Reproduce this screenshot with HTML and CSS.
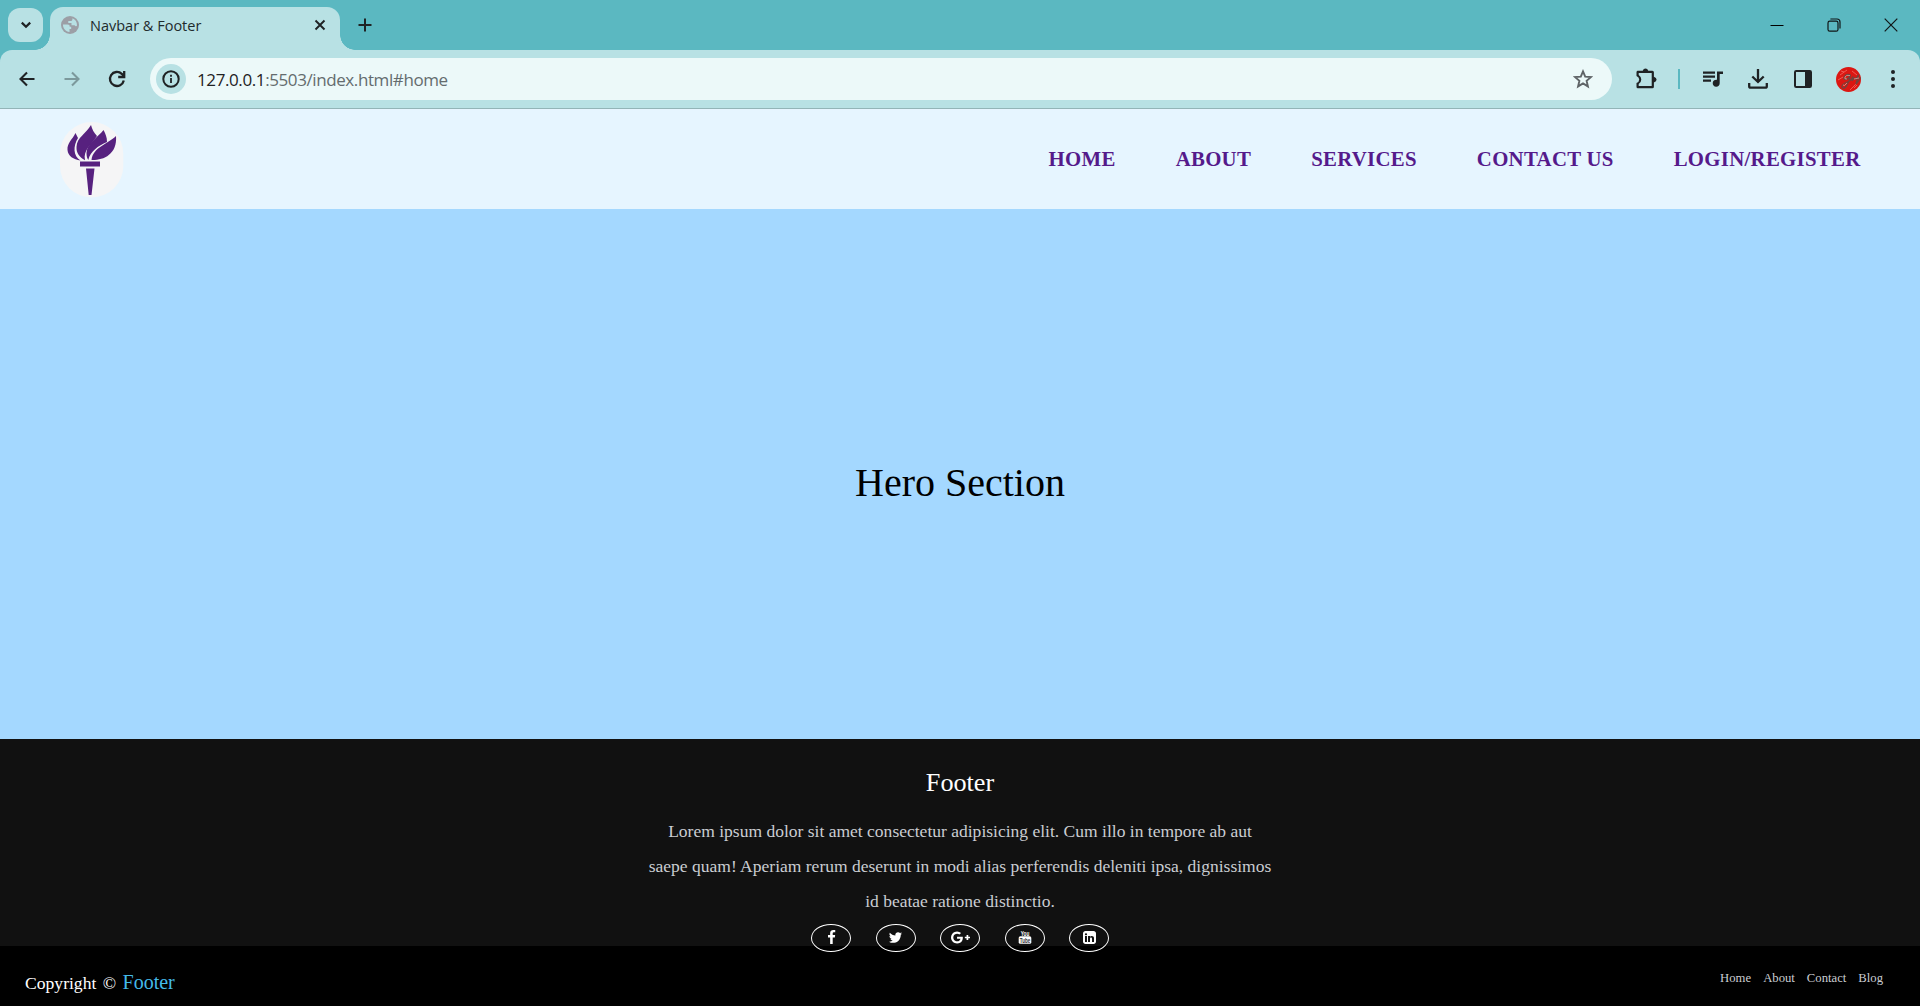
FILE: index.html
```html
<!DOCTYPE html>
<html lang="en">
<head>
<meta charset="utf-8">
<title>Navbar &amp; Footer</title>
<link rel="stylesheet" href="styles.css">
</head>
<body>
<div class="tabstrip">
  <button class="tab-search" aria-label="Search tabs"><svg width="12" height="12" viewBox="0 0 12 12"><path d="M1.8 3.6 6 7.8l4.200-4.200" fill="none" stroke="#1f2224" stroke-width="2.200"/></svg></button>
  <div class="tab">
    <svg class="globe" width="18" height="18" viewBox="0 0 18 18"><circle cx="9" cy="9" r="9" fill="#9c9fa6"/><path d="M2 8.500h4.500c1.800 0 2.200.8 2.200 2.200h1.500v2.200H8.500v3C4.800 15.600 1.800 12.600 2 8.500zM11.500 2.300c3 1.200 4.700 4 4.500 7.200-.6 1.500-1.800.4-2.500-.3h-3V7H7.300V4.900h2.800c1 0 1.400-.8 1.400-2.600z" fill="#b8e1e4"/></svg>
    <span class="tab-title">Navbar &amp; Footer</span>
    <svg width="12" height="12" viewBox="0 0 12 12"><path d="m1.500 1.500 9 9m0-9-9 9" stroke="#1f2224" stroke-width="1.900"/></svg>
  </div>
  <button class="new-tab" aria-label="New tab"><svg width="14" height="14" viewBox="0 0 14 14"><path d="M7 .5v13M.5 7h13" stroke="#1f2224" stroke-width="2"/></svg></button>
  <div class="window-controls">
    <svg width="14" height="14" viewBox="0 0 14 14"><path d="M.5 7.500h13" stroke="#000" stroke-width="1"/></svg>
    <svg width="14" height="14" viewBox="0 0 14 14" fill="none" stroke="#101516" stroke-width="1.200"><rect x="1" y="3.200" width="10" height="10" rx="1.800"/><path d="M3.400 1H10q3 0 3 3v6.500"/></svg>
    <svg width="14" height="14" viewBox="0 0 14 14"><path d="m.7.7 12.600 12.600m0-12.600L.7 13.300" stroke="#101516" stroke-width="1.200"/></svg>
  </div>
</div>
<div class="toolbar-back">
<div class="toolbar">
  <div class="history">
    <svg width="20" height="20" viewBox="0 0 20 20" fill="none" stroke="#1f2224" stroke-width="2.100"><path d="M17.500 10H4M10 3.500 3.500 10l6.500 6.500"/></svg>
    <svg width="20" height="20" viewBox="0 0 20 20" fill="none" stroke="#7c999c" stroke-width="2.100"><path d="M2.500 10H16M10 3.500l6.500 6.500-6.500 6.500"/></svg>
    <svg width="20" height="20" viewBox="0 0 20 20" fill="none" stroke="#1f2224" stroke-width="2.300"><path d="M16.800 11.500A7 7 0 1 1 14.800 4.900L17 7.100"/><path d="M17.200 2v6h-6"/></svg>
  </div>
  <div class="omnibox">
    <span class="site-info"><svg width="18" height="18" viewBox="0 0 18 18"><circle cx="9" cy="9" r="7.700" fill="none" stroke="#1f2224" stroke-width="2"/><path d="M9 8v5M9 4.800v2" stroke="#1f2224" stroke-width="1.800"/></svg></span>
    <span class="url"><b>127.0.0.1</b>:5503/index.html#home</span>
    <svg width="20" height="20" viewBox="0 0 20 20"><path d="m10 2.400 2.200 5.200 5.700.5-4.300 3.700 1.300 5.600-4.900-3-4.900 3 1.300-5.600L2.100 8.100l5.700-.5z" fill="none" stroke="#5f6467" stroke-width="1.900"/></svg>
  </div>
  <div class="actions">
    <svg width="24" height="24" viewBox="0 0 24 24"><path d="M3.500 3.800h5.200q.8-2.300 2.800-2.300t2.800 2.300h4.100q1.500 0 1.500 1.500v4.400q2.700.8 2.700 2.900t-2.700 2.900v4.200q0 1.500-1.500 1.500H3.800q-1.300 0-1.300-1.500V16q2.700-1 2.700-3.500T2.500 9V5.300q0-1.500 1-1.500z" fill="#1f2224"/><path d="M4.700 5.900h13v13.200h-13v-2q2.600-1.600 2.600-4.500T4.700 8z" fill="#b8e1e4"/></svg>
    <i class="divider"></i>
    <svg class="media" width="20" height="18" viewBox="0 0 20 18" fill="#1f2224"><path d="M0 1.500h12v2.200H0zm0 4h12v2.200H0zm0 4h8v2.200H0zM14 1.500h6v2.400h-3.300V13a3.500 3.500 0 1 1-2.700-3.200z"/></svg>
    <svg class="download" width="20" height="20" viewBox="0 0 20 20" fill="none" stroke="#1f2224" stroke-width="2.300"><path d="M10 0v13M4.300 7.500 10 13l5.700-5.500M1.200 14v3.200q0 1.500 1.500 1.500h14.600q1.500 0 1.500-1.500V14"/></svg>
    <svg class="panel" width="18" height="18" viewBox="0 0 18 18"><rect x="1" y="1" width="16" height="16" rx="1.200" fill="none" stroke="#1f2224" stroke-width="2"/><path d="M11 1h6v16h-6z" fill="#1f2224"/></svg>
    <svg class="avatar" width="25" height="25" viewBox="0 0 25 25"><circle cx="12.500" cy="12.500" r="12.500" fill="#dc1712"/><path d="m4 8 7-5M2 13l5-3M14 23l8-8M16 4l5 4M18 21l3-3M5 4l3 1" stroke="#ee5a52" stroke-width="1"/><path d="M14.500 8q-4-1.500-6 1.500t1.500 3q3.500-1.500 4.500-5-1 7-4 11.500-3.500 4-4.500 1t7.500-6q3-2 3.500-4.500l-1 4.500q3-4.500 3-2.500t2.500-2-.5 4 3.500-3" fill="none" stroke="#73443e" stroke-width="1.300"/><path d="M14 8.500q-4-1-5 1.500t2 2m0 4q-3 4-4 2m11-6 5-1" fill="none" stroke="#d8b5a9" stroke-width=".7"/></svg>
    <svg class="menu" width="6" height="20" viewBox="0 0 6 20" fill="#1f2224"><circle cx="3" cy="3" r="2"/><circle cx="3" cy="10" r="2"/><circle cx="3" cy="17" r="2"/></svg>
  </div>
</div>
</div>

<header class="navbar">
  <a class="logo" href="#home"><svg width="64" height="76" viewBox="0 0 64 76"><rect width="63.300" height="75.500" rx="31.600" fill="#f5f5f6"/><g fill="#57217f"><path d="M15.500 11C12 18 7 21 7.500 28c.5 6 6 9.500 13 10.500C13 34 13 24 18 16z"/><path d="M31 3C26 12 17 15 16.500 25c-.3 6 3 10 8.500 13.200C23 28 31 23 37 14 34 11 32 7 31 3z"/><path d="M43.500 8C38 15 26.500 22 26.500 31c0 3 .5 5 1.800 7C30.500 29 38 24 47 20c0-5-1.500-8-3.500-12z"/><path d="M56 14C48 22 33 25 31.500 38c11 .5 26-5 24.500-24z"/><path d="M20 39.500h20v5H20zM26 46.500h8.500L31.500 73h-2.800z"/></g></svg></a>
  <nav class="nav-links">
    <a href="#home">HOME</a><a href="#about">ABOUT</a><a href="#services">SERVICES</a><a href="#contact">CONTACT US</a><a href="#login">LOGIN/REGISTER</a>
  </nav>
</header>

<main class="hero">Hero Section</main>

<footer class="footer">
  <div class="footer-content">
    <h3>Footer</h3>
    <p>Lorem ipsum dolor sit amet consectetur adipisicing elit. Cum illo in tempore ab aut<br>saepe quam! Aperiam rerum deserunt in modi alias perferendis deleniti ipsa, dignissimos<br>id beatae ratione distinctio.</p>
    <ul class="socials">
      <li><a href="#facebook"><svg width="15" height="15" viewBox="0 0 1792 1792"><path d="M1343 12v264h-157q-86 0-116 36t-30 108v189h293l-39 296h-254v759h-306v-759h-255v-296h255v-218q0-186 104-288.500t277-102.500q147 0 228 12z"/></svg></a></li>
      <li><a href="#twitter"><svg width="15" height="15" viewBox="0 0 1792 1792"><path d="M1684 408q-67 98-162 167 1 14 1 42 0 130-38 259.500t-115.500 248.500-184.500 210.500-258 146-323 54.500q-271 0-496-145 35 4 78 4 225 0 401-138-105-2-188-64.500t-114-159.500q33 5 61 5 43 0 85-11-112-23-185.500-111.500t-73.500-205.500v-4q68 38 146 41-66-44-105-115t-39-154q0-88 44-163 121 149 294.500 238.500t371.500 99.500q-8-38-8-74 0-134 94.500-228.500t228.500-94.500q140 0 236 102 109-21 205-78-37 115-142 178 93-10 186-50z"/></svg></a></li>
      <li><a href="#google"><svg width="19" height="15" viewBox="0 0 2304 1792"><path d="M1437 913q0 208-87 370.500t-248 254-369 91.500q-149 0-285-58t-234-156-156-234-58-285 58-285 156-234 234-156 285-58q286 0 491 192l-199 191q-117-113-292-113-123 0-227.500 62t-165.500 168.500-61 232.500 61 232.500 165.500 168.500 227.500 62q83 0 152.500-23t114.500-57.500 78.500-78.500 49-83 21.500-74h-416v-252h692q12 63 12 122zm867-122v210h-209v209h-210v-209h-209v-210h209v-209h210v209h209z"/></svg></a></li>
      <li><a href="#youtube"><svg width="20" height="20" viewBox="-3 -2 20 20"><text class="you" x="7" y="6.500" text-anchor="middle" textLength="8.500" lengthAdjust="spacingAndGlyphs">You</text><rect x=".7" y="7.300" width="12.600" height="7.500" rx="1.600"/><text class="tube" x="7" y="13.500" text-anchor="middle" textLength="10.500" lengthAdjust="spacingAndGlyphs">Tube</text></svg></a></li>
      <li><a href="#linkedin"><svg width="13" height="13" viewBox="128 128 1536 1536"><path d="M365 1414h231v-694h-231v694zm246-908q-1-52-36-86t-93-34-94.500 34-36.500 86q0 51 35.500 85.500t92.500 34.500h1q59 0 95-34.500t36-85.500zm585 908h231v-398q0-154-73-233t-193-79q-136 0-209 117h2v-101h-231q3 66 0 694h231v-388q0-38 7-56 15-35 45-59.500t74-24.500q116 0 116 157v371zm468-998v960q0 119-84.500 203.500t-203.500 84.500h-960q-119 0-203.500-84.500t-84.500-203.500v-960q0-119 84.500-203.500t203.500-84.500h960q119 0 203.500 84.500t84.500 203.500z"/></svg></a></li>
    </ul>
  </div>
  <div class="footer-bottom">
    <p>Copyright © <a href="#home">Footer</a></p>
    <nav><a href="#home">Home</a><a href="#about">About</a><a href="#contact">Contact</a><a href="#blog">Blog</a></nav>
  </div>
</footer>
</body>
</html>
```
FILE: styles.css
```css
* { box-sizing: border-box; margin: 0; padding: 0; }
body { width: 1920px; height: 1006px; overflow: hidden; font-family: "Liberation Serif", "Times New Roman", serif; background: #000; }
svg { display: block; flex: none; }
button { border: 0; background: none; }
a { text-decoration: none; }

.tabstrip { height: 50px; display: flex; background: #5bb8c1; padding-left: 8px; }
.tab-search { width: 35px; height: 34px; margin-top: 8px; border-radius: 12px; background: #b8e1e4; display: flex; align-items: center; justify-content: center; }
.tab { position: relative; width: 290px; height: 43px; margin: 7px 0 0 7px; padding: 0 14px 7px 11px; border-radius: 13px 13px 0 0; background: #b8e1e4; display: flex; align-items: center; }
.tab::before, .tab::after { content: ""; position: absolute; bottom: 0; width: 15px; height: 15px; }
.tab::before { left: -15px; background: radial-gradient(circle at 0 0, transparent 14.500px, #b8e1e4 15px); }
.tab::after { right: -15px; background: radial-gradient(circle at 100% 0, transparent 14.500px, #b8e1e4 15px); }
.tab-title { flex: 1; margin-left: 11px; padding-top: 1px; font: 14.500px/20px "Open Sans", sans-serif; color: #1f2b2d; }
.new-tab { margin-left: 18px; width: 15px; height: 50px; }
.window-controls { margin-left: auto; width: 128px; height: 49px; margin-right: 22px; display: flex; align-items: center; justify-content: space-between; }

.toolbar-back { background: #5bb8c1; }
.toolbar { height: 59px; display: flex; align-items: center; background: #b8e1e4; border-radius: 12px 12px 0 0; border-bottom: 1px solid #93b4b7; padding: 0 24.500px 0 17px; }
.history { display: flex; width: 133px; gap: 25px; }
.omnibox { width: 1462px; height: 42px; border-radius: 21px; background: #ecf9f9; display: flex; align-items: center; padding: 0 19px 0 6px; }
.site-info { width: 30px; height: 30px; border-radius: 50%; background: #b8e1e4; display: flex; align-items: center; justify-content: center; }
.url { flex: 1; margin-left: 11px; padding-top: 1px; font: 17px/24px "Open Sans", sans-serif; letter-spacing: -.4px; color: #646c6e; }
.url b { font-weight: 400; color: #1f2224; }
.actions { flex: 1; display: flex; align-items: center; padding-left: 22px; }
.divider { width: 2px; height: 20px; margin-left: 20px; background: #5bb8c1; }
.media { margin-left: 23px; }
.download { margin-left: 24.500px; }
.panel { margin-left: 26px; }
.avatar { margin-left: 24px; }
.menu { margin-left: auto; }

.navbar { height: 100px; padding: 0 59.500px 0 60px; display: flex; align-items: center; justify-content: space-between; background: #e6f5ff; }
.logo { padding-top: 1px; }
.nav-links { display: flex; gap: 60px; }
.nav-links a { font-size: 20.800px; font-weight: 700; letter-spacing: .3px; color: #551a8b; }
.hero { height: 530px; display: flex; align-items: center; justify-content: center; font-size: 40px; padding-top: 17px; background: #a4d8ff; color: #000; }

.footer { height: 267px; background: #111; color: #fff; display: flex; flex-direction: column; }
.footer-content { height: 207px; display: flex; flex-direction: column; align-items: center; text-align: center; padding-top: 29px; }
.footer-content h3 { font-weight: 400; font-size: 26.200px; line-height: 30px; }
.footer-content p { margin-top: 16px; font-size: 17.520px; line-height: 35px; color: #cacdd2; }
.socials { position: relative; display: flex; gap: 24.500px; margin-top: 5px; list-style: none; }
.socials a { width: 40px; height: 28px; border: 1.100px solid #fff; border-radius: 50%; display: flex; align-items: center; justify-content: center; fill: #fff; padding-bottom: 2px; }
.you, .tube { font-family: "Liberation Sans", Arial, sans-serif; font-weight: 700; }
.you { font-size: 7.500px; }
.tube { font-size: 7px; fill: #333; }
.footer-bottom { height: 60px; background: #000; display: flex; justify-content: space-between; padding: 0 37px 0 25px; }
.footer-bottom p { font-size: 17.600px; line-height: 24px; margin-top: 24px; word-spacing: 2px; }
.footer-bottom p a { color: #44bae8; font-size: 20px; }
.footer-bottom nav { display: flex; gap: 12px; margin-top: 23px; }
.footer-bottom nav a { color: #cacdd2; font-size: 12.700px; line-height: 18px; }
```
